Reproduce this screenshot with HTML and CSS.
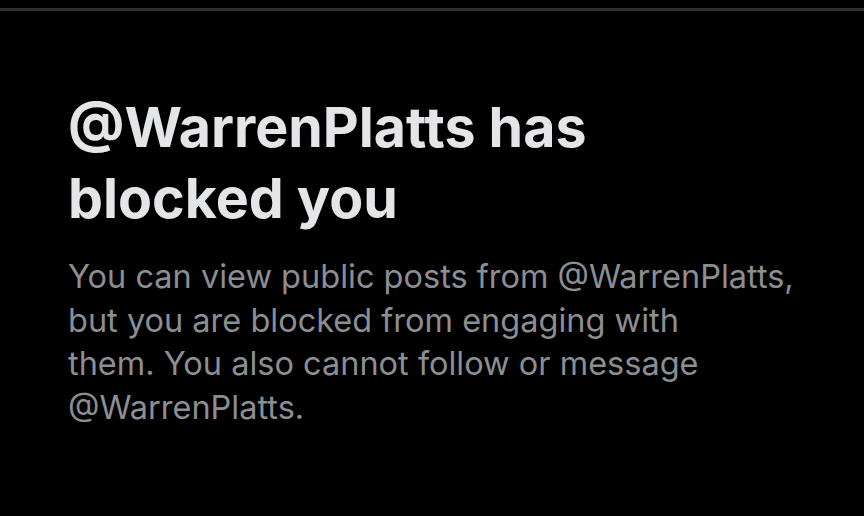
FILE: index.html
```html
<!DOCTYPE html>
<html>
<head>
<meta charset="utf-8">
<link rel="stylesheet" href="styles.css">
</head>
<body>
<div class="topline"></div>
<main class="content">
  <h1 class="title">@WarrenPlatts has blocked you</h1>
  <p class="desc">You can view public posts from @WarrenPlatts, but you are blocked from engaging with<br>them. You also cannot follow or message @WarrenPlatts.</p>
</main>
</body>
</html>
```

FILE: styles.css
```css
html, body {
  margin: 0;
  padding: 0;
  background: #000;
}
body {
  width: 864px;
  height: 516px;
  overflow: hidden;
  padding-top: 8px;
  box-sizing: border-box;
}
.topline {
  height: 3px;
  background: #2f3133;
}
.content {
  padding: 80px 0 0 68px;
}
.title {
  margin: 0;
  font-family: "Inter", "Roboto", sans-serif;
  font-weight: 700;
  font-size: 55.5px;
  line-height: 71px;
  color: #e4e5e6;
  width: 600px;
}
.desc {
  margin: 22px 0 0 0;
  font-family: "Inter", "Roboto", sans-serif;
  font-size: 32.5px;
  line-height: 43.7px;
  color: #8b8e92;
  width: 745px;
}
```
